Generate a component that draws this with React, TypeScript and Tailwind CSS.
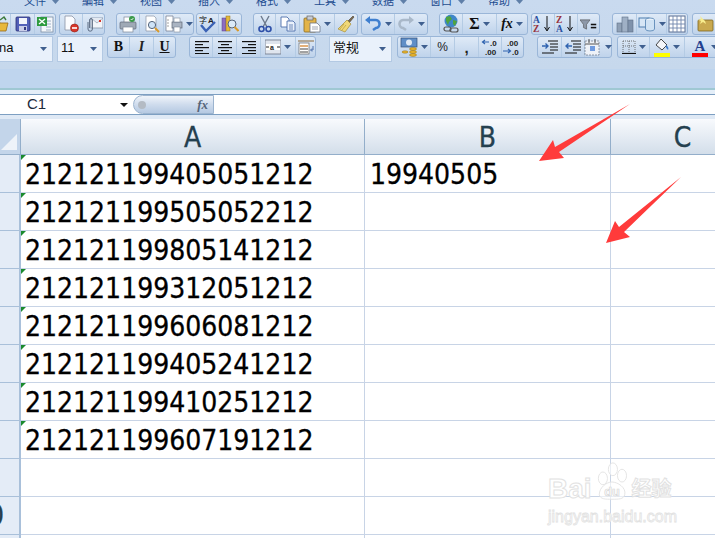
import type { ReactNode } from "react";

const CJK = "font-['Liberation_Sans','Noto_Sans_CJK_SC',sans-serif]";
const CELL = "font-['DejaVu_Sans_Condensed','DejaVu_Sans',sans-serif] [font-stretch:condensed]";

const Ic = ({ children }: { children: ReactNode }) => (
  <svg width="18" height="18" viewBox="0 0 18 18" className="shrink-0">
    {children}
  </svg>
);

const Caret = ({ color = "#3f5f8f" }: { color?: string }) => (
  <svg width="7" height="4" viewBox="0 0 7 4" className="shrink-0">
    <path d="M0 0h7L3.5 4z" fill={color} />
  </svg>
);

const Btn = ({ w, caret, last, children }: { w: number; caret?: boolean; last?: boolean; children?: ReactNode }) => (
  <div
    className={`flex h-full items-center justify-center gap-[3px] ${last ? "" : "border-r border-[#b4cbe4]"}`}
    style={{ width: w }}
  >
    {children}
    {caret && <Caret />}
  </div>
);

const Group = ({ ml = 0, children }: { ml?: number; children: ReactNode }) => (
  <div
    className="flex h-[22px] shrink-0 rounded-[3px] border border-[#9ab6d8] bg-gradient-to-b from-[#dfeaf7] to-[#bfd3eb]"
    style={{ marginLeft: ml }}
  >
    {children}
  </div>
);

const Combo = ({ w, ml = 0, pl = 3, children }: { w: number; ml?: number; pl?: number; children: ReactNode }) => (
  <div
    className={`flex h-[26px] shrink-0 items-center justify-between border border-[#b3c9e3] bg-[#e9f1fb] pr-[5px] text-[13px] text-[#111] ${CJK}`}
    style={{ width: w, marginLeft: ml, paddingLeft: pl }}
  >
    <span className="pb-[2px]">{children}</span>
    <Caret />
  </div>
);

const Folder = () => (
  <Ic>
    <path d="M1 6h6l1 2h8l-2 8H2z" fill="#e8b83c" stroke="#94691a" strokeWidth=".8" />
    <path d="M8 5l4-3 2 3" fill="none" stroke="#3d7a3a" strokeWidth="1.4" />
  </Ic>
);
const Save = () => (
  <Ic>
    <rect x="2" y="2" width="14" height="14" rx="1" fill="#5260b8" stroke="#2a2f73" strokeWidth=".8" />
    <rect x="5" y="3" width="8" height="6" fill="#f2f4fb" />
    <rect x="5" y="11" width="8" height="5" fill="#c9cde8" />
    <rect x="10" y="12" width="2" height="3" fill="#333a80" />
  </Ic>
);
const ExcelDoc = () => (
  <Ic>
    <rect x="5" y="2" width="12" height="15" fill="#f4f7fb" stroke="#7c8ea5" strokeWidth=".8" />
    <path d="M10 6h5M10 9h5M10 12h5M10 15h5" stroke="#8aa0ba" strokeWidth=".8" />
    <rect x="1" y="2" width="10" height="9" fill="#2e9b3f" />
    <path d="M3 4l6 5M9 4l-6 5" stroke="#fff" strokeWidth="1.4" />
  </Ic>
);
const Perm = () => (
  <Ic>
    <path d="M3 1h7l3 3v11H3z" fill="#fbfcff" stroke="#8a93a3" strokeWidth=".8" />
    <circle cx="12.5" cy="13" r="4" fill="#d8362a" stroke="#8d1e17" strokeWidth=".6" />
    <rect x="10" y="12.2" width="5" height="1.6" fill="#fff" />
  </Ic>
);
const Attach = () => (
  <Ic>
    <rect x="6" y="3" width="12" height="10" fill="#f2f5fa" stroke="#8593a8" strokeWidth=".8" />
    <path d="M6 3l6 5 6-5" fill="#e3e9f2" stroke="#8593a8" strokeWidth=".6" />
    <rect x="14" y="5" width="2" height="2" fill="#d8362a" />
    <path d="M3 7v7a2.2 2.2 0 0 0 4.4 0V5a1.4 1.4 0 0 0-2.8 0v8" fill="none" stroke="#5d6c82" strokeWidth="1" />
  </Ic>
);
const Printer = () => (
  <Ic>
    <rect x="5" y="2" width="8" height="6" fill="#fff" stroke="#7c8898" strokeWidth=".7" />
    <rect x="1" y="7" width="16" height="7" rx="1" fill="#9fa9b6" stroke="#5c6675" strokeWidth=".7" />
    <rect x="4" y="12" width="10" height="5" fill="#fff" stroke="#7c8898" strokeWidth=".7" />
    <circle cx="13" cy="4" r="3" fill="#3b9a4a" />
    <path d="M11.7 4l1 1 1.7-2" stroke="#fff" fill="none" strokeWidth=".8" />
  </Ic>
);
const Preview = () => (
  <Ic>
    <path d="M3 1h8l2 2v13H3z" fill="#fff" stroke="#8a93a3" strokeWidth=".7" />
    <circle cx="9" cy="10" r="3.6" fill="#cfe3f7" stroke="#55647a" strokeWidth="1" />
    <path d="M12 13l4 4" stroke="#d99a2b" strokeWidth="2" />
  </Ic>
);
const PageSetup = () => (
  <Ic>
    <path d="M1 1h7v15H1z" fill="#fff" stroke="#6d7789" strokeWidth=".7" />
    <path d="M2.5 5h2M2.5 8h2M2.5 11h2" stroke="#444" strokeWidth="1" strokeDasharray="1 1" />
    <rect x="7" y="7" width="10" height="6" fill="#aab4c2" stroke="#5c6675" strokeWidth=".7" />
    <rect x="9" y="3" width="6" height="4" fill="#fff" stroke="#7c8898" strokeWidth=".6" />
    <rect x="9" y="12" width="6" height="5" fill="#fff" stroke="#7c8898" strokeWidth=".6" />
  </Ic>
);
const Spell = () => (
  <svg width="20" height="18" viewBox="0 0 20 18" className="shrink-0">
    <text x="1" y="8" fontSize="8" fontFamily="Noto Sans CJK SC" fill="#111">字</text>
    <text x="10" y="8" fontSize="8" fontWeight="700" fontFamily="Liberation Sans" fill="#222">A</text>
    <path d="M3 10l5 6 9-9" fill="none" stroke="#3b62b5" strokeWidth="2.4" />
  </svg>
);
const Research = () => (
  <Ic>
    <rect x="1" y="3" width="4" height="13" fill="#8d6cc0" stroke="#5a4090" strokeWidth=".5" />
    <rect x="5" y="1" width="4" height="15" fill="#e3b93b" stroke="#94701c" strokeWidth=".5" />
    <circle cx="11" cy="9" r="4" fill="#dbeaf8" stroke="#55647a" strokeWidth="1" />
    <path d="M13.5 12l4 4" stroke="#d99a2b" strokeWidth="2" />
  </Ic>
);
const Cut = () => (
  <Ic>
    <path d="M5 1l6 11M13 1L7 12" stroke="#6d7a8c" strokeWidth="1.4" />
    <circle cx="5.5" cy="14" r="2.5" fill="none" stroke="#2d4fa8" strokeWidth="1.6" />
    <circle cx="12.5" cy="14" r="2.5" fill="none" stroke="#2d4fa8" strokeWidth="1.6" />
  </Ic>
);
const Copy = () => (
  <Ic>
    <path d="M2 2h6l2 2v8H2z" fill="#fff" stroke="#4f71ab" strokeWidth=".9" />
    <path d="M8 6h6l2 2v8H8z" fill="#eaf1fb" stroke="#4f71ab" strokeWidth=".9" />
    <path d="M10 10h4M10 12h4M10 14h4" stroke="#4f71ab" strokeWidth=".8" />
  </Ic>
);
const Paste = () => (
  <Ic>
    <rect x="1" y="3" width="12" height="14" rx="1" fill="#e3b449" stroke="#8a6a1f" strokeWidth=".8" />
    <rect x="4" y="1" width="6" height="4" fill="#c9ccd3" stroke="#666" strokeWidth=".7" />
    <path d="M7 8h7l3 3v6H7z" fill="#fff" stroke="#6d7789" strokeWidth=".8" />
    <path d="M9 12h6M9 14h6" stroke="#8a93a3" strokeWidth=".8" />
  </Ic>
);
const Brush = () => (
  <Ic>
    <path d="M11 6l5-5 1 1-5 6z" fill="#7a6a52" stroke="#4d3f2c" strokeWidth=".6" />
    <path d="M10 5l4 4-6 8-7-3z" fill="#f0d878" stroke="#a88e35" strokeWidth=".7" />
    <path d="M5 15l4-5M3 14l4-5" stroke="#a88e35" strokeWidth=".6" />
  </Ic>
);
const Undo = () => (
  <Ic>
    <path d="M5 5h6a4 4 0 0 1 1 8l-3 2" fill="none" stroke="#3f7fcf" strokeWidth="2.6" />
    <path d="M6 1v8L1 5z" fill="#3f7fcf" />
  </Ic>
);
const Redo = () => (
  <Ic>
    <path d="M13 5H7a4 4 0 0 0-1 8l3 2" fill="none" stroke="#a9b8c9" strokeWidth="2.6" />
    <path d="M12 1v8l5-4z" fill="#a9b8c9" />
  </Ic>
);
const Globe = () => (
  <svg width="18" height="20" viewBox="0 0 18 20" className="shrink-0">
    <circle cx="9" cy="7" r="6.5" fill="#3f86c9" />
    <path d="M4 3l4-1 2 3-3 3-1 3-2-4zM11 6l4 1-2 5-2-2z" fill="#4fa33f" />
    <rect x="2" y="13" width="7" height="4" rx="2" fill="none" stroke="#555" strokeWidth="1.2" />
    <rect x="8" y="14" width="8" height="4" rx="2" fill="none" stroke="#555" strokeWidth="1.2" />
  </svg>
);
const Sort = ({ top, bottom }: { top: string; bottom: string }) => (
  <svg width="20" height="20" viewBox="0 0 20 20" className="shrink-0 overflow-visible">
    <text x="0" y="9" fontSize="9.5" fontWeight="700" fontFamily="Liberation Serif" fill={top === "A" ? "#2b4f9e" : "#97303a"}>{top}</text>
    <text x="0" y="18" fontSize="9.5" fontWeight="700" fontFamily="Liberation Serif" fill={top === "A" ? "#97303a" : "#2b4f9e"}>{bottom}</text>
    <path d="M14 2v14M11.5 13l2.5 4 2.5-4" fill="none" stroke="#111" strokeWidth="1" />
  </svg>
);
const Filter = () => (
  <svg width="17" height="11" viewBox="0 0 22 14" className="shrink-0">
    <path d="M0 1h13L8.5 7v6l-4-2V7z" fill="#8d98a8" stroke="#444" strokeWidth=".7" />
    <rect x="14" y="6" width="7" height="2" fill="#111" />
    <rect x="14" y="10" width="7" height="2" fill="#111" />
  </svg>
);
const Chart = () => (
  <Ic>
    <rect x="1" y="8" width="5" height="9" fill="#8fa0b5" stroke="#5f7088" strokeWidth=".6" />
    <rect x="6" y="2" width="6" height="15" fill="#9fb0c5" stroke="#5f7088" strokeWidth=".6" />
    <rect x="12" y="5" width="5" height="12" fill="#7f92ab" stroke="#5f7088" strokeWidth=".6" />
  </Ic>
);
const Shapes = () => (
  <Ic>
    <rect x="1" y="3" width="10" height="9" fill="#d6e6f6" stroke="#4f7fb0" strokeWidth="1" />
    <ellipse cx="12" cy="5" rx="4.5" ry="2" fill="#eaf3fb" stroke="#4f7fb0" strokeWidth=".8" />
    <path d="M7.5 5v9a4.5 2 0 0 0 9 0V5" fill="#cfe2f4" stroke="#4f7fb0" strokeWidth=".8" />
  </Ic>
);
const TableGrid = () => (
  <Ic>
    <rect x="1" y="1" width="16" height="16" fill="#fff" stroke="#5b6f92" strokeWidth="1" />
    <path d="M1 5h16M1 9h16M1 13h16M5 1v16M9 1v16M13 1v16" stroke="#6f86ad" strokeWidth=".9" />
  </Ic>
);
const NoteFolder = () => (
  <Ic>
    <rect x="2" y="5" width="15" height="11" rx="1" fill="#c9a94f" stroke="#7e661f" strokeWidth=".8" />
    <path d="M4 1l1 3-3 1 3 1-1 3 3-2 3 2-1-3" fill="#f7ec8d" />
  </Ic>
);

const Lines = ({ align }: { align: "l" | "c" | "r" }) => {
  const short = align === "l" ? 1 : align === "c" ? 4 : 7;
  return (
    <svg width="15" height="13" viewBox="0 0 15 13" className="shrink-0">
      <rect x="1" y="0" width="14" height="1.2" fill="#111" />
      <rect x={short} y="3" width="8" height="1.2" fill="#111" />
      <rect x="1" y="6" width="14" height="1.2" fill="#111" />
      <rect x={short} y="9" width="8" height="1.2" fill="#111" />
      <rect x="1" y="12" width="14" height="1" fill="#111" />
    </svg>
  );
};
const Merge = () => (
  <svg width="16" height="16" viewBox="0 0 16 16" className="shrink-0">
    <rect x="0" y="1" width="16" height="14" fill="#dfe5ee" stroke="#6b7688" strokeWidth=".8" />
    <rect x="1" y="5" width="14" height="6" fill="#fff" />
    <text x="5" y="10.5" fontSize="7" fontWeight="700" fontFamily="Liberation Sans" fill="#222">a</text>
    <path d="M1 8h3M12 8h3" stroke="#222" strokeWidth="1" />
  </svg>
);
const Wrap = () => (
  <Ic>
    <path d="M1 3h16" stroke="#8a6a3a" strokeWidth="1" />
    <rect x="2" y="5" width="10" height="11" fill="#fff" stroke="#666" strokeWidth=".7" />
    <path d="M3 8h8" stroke="#d07b1f" strokeWidth="1.2" />
    <path d="M3 11h8M3 14h8" stroke="#444" strokeWidth="1" />
    <path d="M16 8v4h-2M15 10.5L13.5 12l1.5 1.5" fill="none" stroke="#4f71ab" strokeWidth="1" />
  </Ic>
);
const Currency = () => (
  <svg width="18" height="20" viewBox="0 0 18 20" className="shrink-0">
    <rect x="1" y="1" width="16" height="9" fill="#5f8ec7" stroke="#34507a" strokeWidth=".7" />
    <ellipse cx="9" cy="5.5" rx="3" ry="3" fill="#dfe9f5" />
    <ellipse cx="13" cy="12" rx="3.5" ry="1.4" fill="#eab52d" stroke="#8d6a12" strokeWidth=".5" />
    <ellipse cx="13" cy="15" rx="3.5" ry="1.4" fill="#eab52d" stroke="#8d6a12" strokeWidth=".5" />
    <ellipse cx="13" cy="18" rx="3.5" ry="1.4" fill="#eab52d" stroke="#8d6a12" strokeWidth=".5" />
    <ellipse cx="5" cy="15" rx="3" ry="1.2" fill="#eab52d" stroke="#8d6a12" strokeWidth=".5" />
  </svg>
);
const Dec = ({ inc }: { inc?: boolean }) => (
  <svg width="19" height="18" viewBox="0 0 19 18" className="shrink-0">
    <text x={inc ? 9 : 4} y="8" fontSize="8" fontWeight="700" fontFamily="Liberation Sans" fill="#222">{inc ? ".0" : ".00"}</text>
    <text x={inc ? 4 : 9} y="16.5" fontSize="8" fontWeight="700" fontFamily="Liberation Sans" fill="#222">{inc ? ".00" : ".0"}</text>
    {inc ? <path d="M8 4H2M4 2L1.5 4 4 6" fill="none" stroke="#2f63b0" strokeWidth="1.2" /> : <path d="M0 13h7M5 11l2.5 2L5 15" fill="none" stroke="#2f63b0" strokeWidth="1.2" />}
  </svg>
);
const Indent = ({ out }: { out?: boolean }) => (
  <svg width="16" height="15" viewBox="0 0 16 15" className="shrink-0">
    <path d="M6 1h10M8 4h8M8 7h8M8 10h8M0 13h12" stroke="#111" strokeWidth="1.2" />
    <path d={out ? "M7 6H1M3.5 3.5L1 6l2.5 2.5" : "M0 6h6M3.5 3.5L6 6 3.5 8.5"} fill="none" stroke="#2f63b0" strokeWidth="1.4" />
  </svg>
);
const CondFormat = () => (
  <Ic>
    <rect x="1" y="3" width="14" height="14" fill="#eef2f8" stroke="#6b7688" strokeWidth=".7" strokeDasharray="2 1" />
    <path d="M1 6h14M5 1v4M11 1v4" stroke="#555" strokeWidth="1" />
    <rect x="6" y="8" width="5" height="5" fill="#6f9be0" />
  </Ic>
);
const Borders = () => (
  <svg width="14" height="14" viewBox="0 0 14 14" className="shrink-0">
    <path d="M1 1h12M1 6h12M1 1v12M7 1v12M13 1v12" stroke="#555" strokeWidth=".8" strokeDasharray="1 1" />
    <path d="M0 13.5h14" stroke="#111" strokeWidth="1.2" />
  </svg>
);
const Fill = () => (
  <svg width="16" height="19" viewBox="0 0 16 19" className="shrink-0">
    <path d="M7 1l6 6-5 5-6-5z" fill="#f4f6fa" stroke="#333" strokeWidth=".9" />
    <path d="M12 7c2 1 3 3 2 5-1-1-3-3-2-5z" fill="#3f7fcf" />
    <rect x="0" y="15" width="16" height="4" fill="#ffff00" />
  </svg>
);
const FontColor = () => (
  <svg width="16" height="19" viewBox="0 0 16 19" className="shrink-0">
    <text x="8" y="13" textAnchor="middle" fontSize="15" fontWeight="700" fontFamily="Liberation Serif" fill="#24408f">A</text>
    <rect x="0" y="15" width="16" height="4" fill="#ff0000" />
  </svg>
);

const MENU = ["文件", "編辑", "视图", "插入", "格式", "工具", "数据", "窗口", "帮助"];
const VALUES = [
  "212121199405051212",
  "212121199505052212",
  "212121199805141212",
  "212121199312051212",
  "212121199606081212",
  "212121199405241212",
  "212121199410251212",
  "212121199607191212",
];

const Ribbon = () => (
  <div className="h-[88px] overflow-hidden bg-[#bfd5ee]">
    <div className="h-[69px] bg-gradient-to-b from-[#c9daef] to-[#c6d8ec]">
      <div className={`flex h-[13px] pl-[24px] ${CJK}`}>
        {MENU.map((m) => (
          <div key={m} className="flex w-[58px] shrink-0 -translate-y-[5px] items-center gap-[6px]">
            <span className="text-[11px] leading-[13px] text-[#1e4d8f]">{m}</span>
            <Caret color="#5f7fa8" />
          </div>
        ))}
      </div>
      <div className="-ml-[10px] flex h-[23px] w-[760px]">
        <Group>
          <Btn w={20}><Folder /></Btn>
          <Btn w={24}><Save /></Btn>
          <Btn w={20} last><ExcelDoc /></Btn>
        </Group>
        <Group ml={3}>
          <Btn w={23}><Perm /></Btn>
          <Btn w={21} last><Attach /></Btn>
        </Group>
        <Group ml={11}>
          <Btn w={23}><Printer /></Btn>
          <Btn w={24}><Preview /></Btn>
          <Btn w={29} caret last><PageSetup /></Btn>
        </Group>
        <Group ml={2}>
          <Btn w={22}><Spell /></Btn>
          <Btn w={22} last><Research /></Btn>
        </Group>
        <Group ml={11}>
          <Btn w={22}><Cut /></Btn>
          <Btn w={24}><Copy /></Btn>
          <Btn w={35} caret><Paste /></Btn>
          <Btn w={22} last><Brush /></Btn>
        </Group>
        <Group ml={3}>
          <Btn w={33} caret><Undo /></Btn>
          <Btn w={32} caret last><Redo /></Btn>
        </Group>
        <Group ml={11}>
          <Btn w={23}><Globe /></Btn>
          <Btn w={34} caret>
            <span className="font-['Liberation_Serif',serif] text-[16px] font-bold leading-none text-[#111]">Σ</span>
          </Btn>
          <Btn w={30} caret last>
            <span className="font-['Liberation_Serif',serif] text-[14px] font-bold italic leading-none text-[#111]">fx</span>
          </Btn>
        </Group>
        <Group ml={3}>
          <Btn w={23}><Sort top="A" bottom="Z" /></Btn>
          <Btn w={23}><Sort top="Z" bottom="A" /></Btn>
          <Btn w={21} last><Filter /></Btn>
        </Group>
        <Group ml={12}>
          <Btn w={24}><Chart /></Btn>
          <Btn w={30} caret><Shapes /></Btn>
          <Btn w={20} last><TableGrid /></Btn>
        </Group>
        <Group ml={4}>
          <Btn w={34} caret last><NoteFolder /></Btn>
        </Group>
      </div>
      <div className="-ml-[10px] flex w-[760px]">
        <Combo w={63} pl={8}>na</Combo>
        <Combo w={46} ml={4}>11</Combo>
        <Group ml={4}>
          <Btn w={22}><span className="font-['Liberation_Serif',serif] text-[14px] font-bold leading-none text-[#111]">B</span></Btn>
          <Btn w={24}><span className="font-['Liberation_Serif',serif] text-[14px] font-bold italic leading-none text-[#222]">I</span></Btn>
          <Btn w={21} last><span className="font-['Liberation_Serif',serif] text-[14px] font-bold leading-none text-[#111] underline">U</span></Btn>
        </Group>
        <Group ml={13}>
          <Btn w={23}><Lines align="l" /></Btn>
          <Btn w={24}><Lines align="c" /></Btn>
          <Btn w={24}><Lines align="r" /></Btn>
          <Btn w={35} caret><Merge /></Btn>
          <Btn w={19} last><Wrap /></Btn>
        </Group>
        <Combo w={63} ml={13}>常规</Combo>
        <Group ml={5}>
          <Btn w={33} caret><Currency /></Btn>
          <Btn w={24}><span className="font-['Liberation_Sans',sans-serif] text-[12px] leading-none text-[#222]">%</span></Btn>
          <Btn w={24}><span className="font-['Liberation_Sans',sans-serif] text-[15px] font-bold leading-none text-[#222]">,</span></Btn>
          <Btn w={23}><Dec inc /></Btn>
          <Btn w={21} last><Dec /></Btn>
        </Group>
        <Group ml={13}>
          <Btn w={24}><Indent /></Btn>
          <Btn w={23}><Indent out /></Btn>
          <Btn w={26} caret last><CondFormat /></Btn>
        </Group>
        <Group ml={5}>
          <Btn w={32} caret><Borders /></Btn>
          <Btn w={35} caret><Fill /></Btn>
          <Btn w={40} caret last><FontColor /></Btn>
        </Group>
      </div>
    </div>
  </div>
);

const FormulaBar = () => (
  <>
    <div className="h-[2px] bg-[#9fc8d3]" />
    <div className="h-[4px] bg-[#e4eef8]" />
    <div className="flex h-[21px] border-y border-[#7d9fc2] bg-white">
      <div className={`flex w-[133px] shrink-0 items-center justify-between pl-[27px] pr-[5px] text-[15px] text-[#1c2a3a] ${CJK}`}>
        <span>C1</span>
        <svg width="8" height="4" viewBox="0 0 8 4">
          <path d="M0 0h8L4 4z" fill="#111" />
        </svg>
      </div>
      <div className="flex w-[81px] shrink-0 items-center justify-between rounded-l-[10px] border-y border-l border-r border-[#9cb4cf] bg-gradient-to-b from-[#f0f4fa] via-[#cfdced] to-[#b5c9e2] pl-[4px] pr-[5px]">
        <div className="size-[8px] rounded-full bg-[#b4bbc4]" />
        <span className="font-['Liberation_Serif',serif] text-[13px] font-bold italic leading-none text-[#56657a]">fx</span>
      </div>
    </div>
    <div className="h-[4px] bg-[#dfe9f5]" />
  </>
);

const HeaderCell = ({ label }: { label: string }) => (
  <div className={`flex items-center justify-center border-r border-b border-[#93aeca] bg-gradient-to-b from-[#f8fafd] to-[#d3deea] pt-[3px] text-[28px] leading-none text-[#24404f] [-webkit-text-stroke:.3px_#24404f] ${CELL}`}>
    {label}
  </div>
);

const Sheet = () => {
  const rows = Array.from({ length: 11 }, (_, i) => i);
  return (
    <div className="grid w-[755px] grid-cols-[21px_344px_246px_144px] grid-rows-[36px_repeat(10,38px)_4px]">
      <div className="relative overflow-hidden border-r border-b border-[#93aeca] bg-[#c3d5ea]">
        <div className="absolute bottom-[4px] right-[3px] size-0 border-b-[16px] border-l-[16px] border-b-[#eef3f9] border-l-transparent" />
      </div>
      <HeaderCell label="A" />
      <HeaderCell label="B" />
      <HeaderCell label="C" />
      {rows.map((i) => (
        <div key={i} className="contents">
          <div className="flex items-center justify-end overflow-hidden border-r-2 border-b border-[#a9c0da] bg-[#e4ecf7] pr-[15px]">
            {i === 9 && <span className={`text-[28px] leading-none text-[#24404f] [-webkit-text-stroke:.3px_#24404f] ${CELL}`}>0</span>}
          </div>
          <div className={`relative flex items-center overflow-hidden border-r border-b border-[#c8d4e6] pl-[4px] pt-[3px] text-[28px] leading-none text-black [-webkit-text-stroke:.3px_#000] ${CELL}`}>
            {i < 8 && <span className="absolute left-0 top-0 size-0 border-t-[5px] border-r-[5px] border-t-[#1a8a2e] border-r-transparent" />}
            {VALUES[i]}
          </div>
          <div className={`flex items-center overflow-hidden border-r border-b border-[#c8d4e6] pl-[5px] pt-[3px] text-[28px] leading-none text-black [-webkit-text-stroke:.3px_#000] ${CELL}`}>
            {i === 0 && "19940505"}
          </div>
          <div className="border-b border-[#c8d4e6]" />
        </div>
      ))}
    </div>
  );
};

const Arrows = () => (
  <svg width="715" height="538" viewBox="0 0 715 538" className="pointer-events-none absolute left-0 top-0">
    <polygon points="630,104 555,147 553,140 539,161 564,158 559,152" fill="#ff3b3b" />
    <polygon points="681,177 619,227 615,221 606,243 630,237 624,232" fill="#ff3b3b" />
  </svg>
);

const Watermark = () => (
  <div className="pointer-events-none absolute left-[548px] top-[460px] flex w-[130px] flex-col font-['Liberation_Sans',sans-serif] text-white [-webkit-text-stroke:1px_#e2e2e2]">
    <div className="flex h-[44px] items-end">
      <span className="text-[28px] font-bold leading-[30px]">Bai</span>
      <svg width="40" height="44" viewBox="0 0 44 44" className="shrink-0">
        <g fill="#fff" fillOpacity=".6" stroke="#e2e2e2">
          <ellipse cx="12" cy="18" rx="5" ry="7" />
          <ellipse cx="23" cy="8" rx="5" ry="7" />
          <ellipse cx="33" cy="15" rx="5" ry="7" />
          <path d="M8 36c0-8 8-14 14-14s16 6 14 14c-1 5-7 5-14 5s-13 0-14-5z" />
        </g>
        <text x="22" y="37" textAnchor="middle" fontSize="14" fontWeight="700" fill="#fff" stroke="#d8d8d8" strokeWidth=".8">du</text>
      </svg>
      <span className={`text-[20px] font-bold leading-[30px] ${CJK}`}>经验</span>
    </div>
    <span className="mt-[3px] whitespace-nowrap text-[16px] leading-[20px] [-webkit-text-stroke:.8px_#e2e2e2]">jingyan.baidu.com</span>
  </div>
);

export default function App() {
  return (
    <div className="relative h-[538px] w-[715px] overflow-hidden bg-white">
      <Ribbon />
      <FormulaBar />
      <Sheet />
      <Arrows />
      <Watermark />
    </div>
  );
}
